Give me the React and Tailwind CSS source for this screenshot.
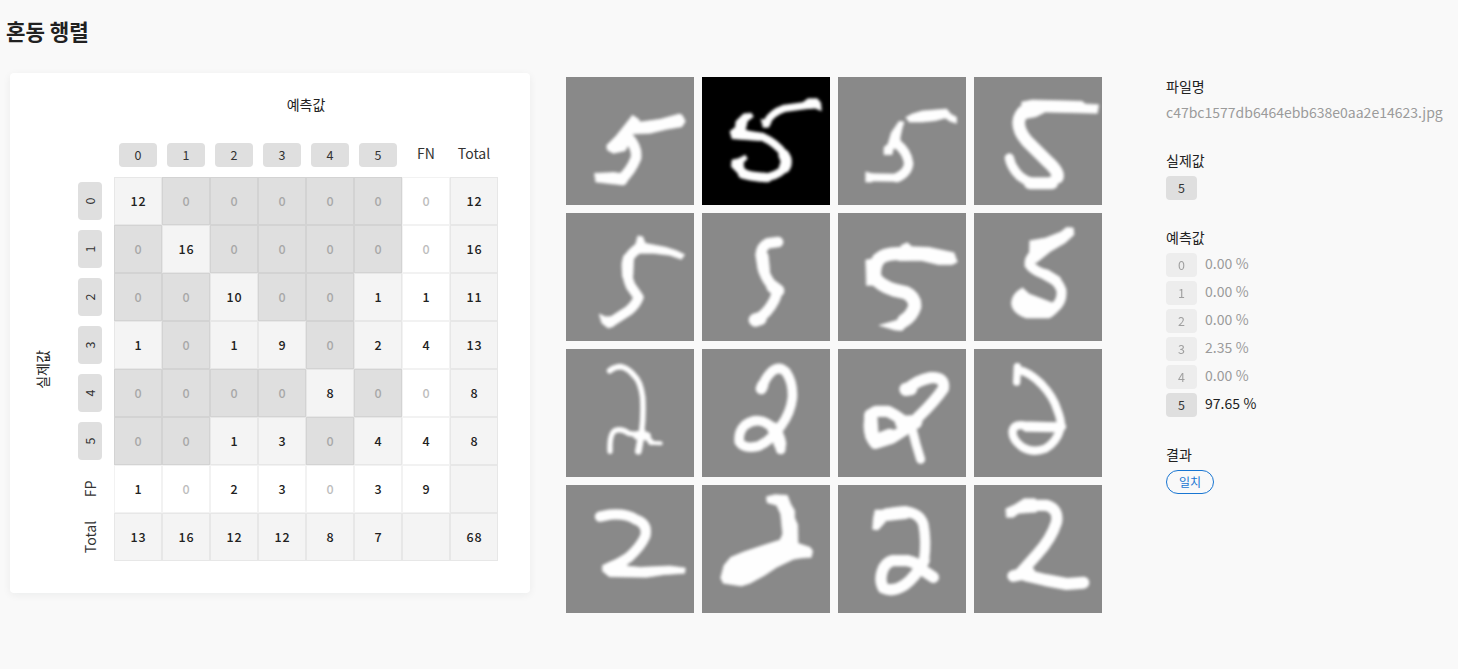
const classes = [0, 1, 2, 3, 4, 5];

const matrix = [
  [12, 0, 0, 0, 0, 0, 0, 12],
  [0, 16, 0, 0, 0, 0, 0, 16],
  [0, 0, 10, 0, 0, 1, 1, 11],
  [1, 0, 1, 9, 0, 2, 4, 13],
  [0, 0, 0, 0, 8, 0, 0, 8],
  [0, 0, 1, 3, 0, 4, 4, 8],
  [1, 0, 2, 3, 0, 3, 9, null],
  [13, 16, 12, 12, 8, 7, null, 68],
];

const predictions = ["0.00 %", "0.00 %", "0.00 %", "2.35 %", "0.00 %", "97.65 %"];

// Handwritten samples: each has a viewBox, pen strokes [path, width] and optional filled blobs.
const samples = [
  {
    box: "18 21 384 384",
    strokes: [
      ["M206 204Q232 232 228 264Q212 304 184 328", 32],
      ["M186 328L158 324", 36],
    ],
    fills: [
      "M218 136L236 148L240 156L300 148L350 134Q364 128 370 142L376 154L366 170L320 178L270 190L216 192L212 210L196 242L160 250L142 240L140 226L168 198L192 168Z",
      "M104 310L150 308L170 320L160 342L108 336Z",
    ],
  },
  {
    box: "426 21 384 384",
    selected: true,
    strokes: [
      ["M620 156Q636 128 674 115L735 107L768 103", 22],
      ["M562 194L606 200Q650 220 672 252Q690 282 670 298Q648 320 608 323Q562 320 540 300", 24],
      ["M548 312Q562 318 622 323", 28],
      ["M672 256Q684 274 674 292", 34],
    ],
    fills: [
      "M728 98L744 86L772 86L782 98L784 122L764 114L734 116Z",
      "M574 130L580 140L562 154L556 180L590 190L620 200L600 212L516 206L510 184L526 172L528 154L550 132Z",
      "M604 148L634 156L626 172L610 172Z",
      "M556 256L562 266L550 278L552 300L536 312L514 290L516 270L534 266Z",
    ],
  },
  {
    box: "18 21 384 384",
    strokes: [
      ["M196 222Q226 246 230 280Q228 308 194 323", 28],
      ["M196 323L114 322", 24],
    ],
    fills: [
      "M222 142L240 132L270 123L344 117L356 132L374 142L374 160L354 154L340 144L310 152L270 156L232 156Z",
      "M202 154L216 156L210 176L204 204L206 230L184 236L180 254L156 254L156 232L168 222L178 188Z",
      "M102 306L124 312L120 336L102 336Z",
    ],
  },
  {
    box: "426 21 384 384",
    strokes: [
      ["M600 112Q562 124 560 158Q560 184 584 212L646 274Q682 306 676 322", 38],
      ["M676 318Q660 342 622 342Q574 336 552 306Q536 286 532 264", 28],
      ["M594 340L660 340", 36],
    ],
    fills: [
      "M570 96L600 90L750 94L760 102L800 104L796 130L640 126L612 140L570 148Z",
    ],
  },
  {
    box: "18 429 384 384",
    strokes: [
      ["M236 534Q206 554 200 580Q198 616 212 648L236 682Q228 704 206 722L150 758", 30],
      ["M205 566L203 614", 34],
    ],
    fills: [
      "M234 498L248 500L256 520L318 532L350 542L374 554L364 568L330 556L280 550L240 550L224 536Z",
      "M118 732L136 740L156 740L162 768L144 774L126 760Z",
    ],
  },
  {
    box: "426 429 384 384",
    strokes: [
      ["M654 516L624 520Q604 530 602 554L608 592Q618 630 642 652Q656 666 642 692Q624 728 592 748", 32],
      ["M608 560L612 600", 36],
      ["M586 750L600 746", 40],
      ["M638 650L654 662", 38],
    ],
  },
  {
    box: "18 429 384 384",
    strokes: [
      ["M222 552Q160 546 140 568Q124 590 128 622Q144 646 186 660L222 668Q250 682 248 710Q240 736 216 752", 40],
      ["M240 550L350 566", 32],
    ],
    fills: [
      "M102 570L146 562L146 646L104 646Z",
      "M208 526L226 518L240 530L290 532L366 548L376 576L360 584L320 584L270 572L200 572Z",
      "M142 766L190 752L220 738L232 760L210 782L188 780Z",
    ],
  },
  {
    box: "426 429 384 384",
    strokes: [
      ["M600 560Q584 580 602 594Q618 608 644 614Q680 634 688 660Q692 694 668 712", 30],
      ["M640 614L672 632", 32],
    ],
    fills: [
      "M594 512L640 504L686 486L704 472L724 474L726 494L700 518L656 544L616 576L578 590L592 552Z",
      "M572 654L592 672L618 682L660 698L696 700Q676 732 652 744L582 744Q540 730 538 700Q540 668 572 654Z",
    ],
  },
  {
    box: "18 15 384 384",
    strokes: [
      ["M149 80Q164 68 184 68Q204 72 222 94Q242 112 248 160Q251 216 245 262", 17],
      ["M246 262L235 322", 20],
      ["M150 322Q148 272 164 260Q184 252 206 268L248 274Q264 280 274 295", 16],
      ["M270 296L302 298", 12],
      ["M232 274L260 276", 26],
    ],
  },
  {
    box: "426 15 384 384",
    strokes: [
      ["M606 132Q614 102 636 82Q658 64 678 84Q700 116 697 162Q692 206 664 244Q636 288 594 307Q552 316 538 294Q534 264 554 244Q582 222 612 234Q650 250 658 292", 29],
      ["M604 134L608 124", 34],
      ["M640 254Q656 274 660 300", 38],
      ["M661 296L662 316", 30],
    ],
  },
  {
    box: "18 15 384 384",
    strokes: [
      ["M224 138Q250 110 296 101Q340 98 334 134Q308 172 262 216L230 250L180 282L130 298Q110 276 112 240Q114 206 134 202L168 202Q204 220 234 248", 34],
      ["M116 214L120 276", 40],
      ["M138 288L174 274", 40],
      ["M210 236L250 234", 42],
      ["M240 254L252 300L266 346", 27],
      ["M222 136L236 134", 40],
    ],
  },
  {
    box: "426 15 384 384",
    strokes: [
      ["M554 114L556 68", 22],
      ["M560 78Q592 84 628 120Q664 158 676 198Q690 234 686 252Q674 294 640 314Q604 328 572 310Q538 286 542 260Q546 240 576 244L690 248", 25],
      ["M584 249L672 250", 29],
    ],
  },
  {
    box: "18 423 384 384",
    strokes: [
      ["M120 518L150 512Q200 508 226 526Q264 538 256 576Q242 608 206 640Q176 660 150 670", 31],
    ],
    fills: [
      "M128 664L160 650L208 644L200 666L240 670L330 666L376 672L374 688L310 692L260 700L148 698L128 682Z",
    ],
  },
  {
    box: "426 423 384 384",
    fills: [
      "M620 458L644 452L682 454L692 480L704 500L704 522L713 542L714 598L750 610L758 620L754 640L722 642L700 646L650 670L614 694L570 718L544 726L490 718L482 702L492 664L512 640L550 624L610 604L660 588L668 570L662 510L650 484L622 476Z",
    ],
    strokes: [],
  },
  {
    box: "18 423 384 384",
    strokes: [
      ["M150 516Q170 504 220 502Q264 508 274 540Q284 592 276 650", 31],
      ["M276 650Q252 698 216 724Q182 746 154 732Q142 712 150 684Q158 656 180 650L226 650Q258 656 268 676L304 700", 34],
      ["M164 512L220 506", 38],
    ],
    fills: ["M130 498L160 498L160 534L138 558L122 556L124 524Z"],
  },
  {
    box: "426 423 384 384",
    strokes: [
      ["M596 484L644 484Q682 496 673 536Q658 584 616 630L568 684", 34],
      ["M582 694L640 708L704 720L754 716", 36],
      ["M544 696L592 686", 36],
    ],
    fills: ["M522 494L548 482L576 464L610 464L614 504L560 508L544 520L524 520Z"],
  },
];

function Sample({ box, strokes, fills = [], selected }) {
  return (
    <div className={"size-32 overflow-hidden " + (selected ? "bg-black" : "bg-[#898989]")}>
      <svg viewBox={box} className="block size-32">
        <g className="blur-[4px]" fill="none" stroke="#fefefe" strokeLinecap="round" strokeLinejoin="round">
          {strokes.map(([d, width]) => (
            <path key={d} d={d} strokeWidth={width} />
          ))}
          {fills.map((d) => (
            <path key={d} d={d} fill="#fefefe" strokeWidth="2" />
          ))}
        </g>
      </svg>
    </div>
  );
}

function Badge({ children, size = "w-[38px]", faded }) {
  return (
    <span
      className={
        "flex h-6 shrink-0 items-center justify-center rounded bg-[#dfdfdf] pt-px text-[12.5px] leading-none text-[#333] " +
        size +
        (faded ? " opacity-45" : "")
      }
    >
      {children}
    </span>
  );
}

function cellTone(value, row, col) {
  if (row === 7 || col === 7) return "bg-[#f4f4f4] text-[#212121]";
  if (row === 6 || col === 6) return value === 0 ? "bg-white text-[#bdbdbd]" : "bg-white text-[#212121]";
  return value === 0 ? "bg-[#dfdfdf] text-[#a8a8a8]" : "bg-[#f4f4f4] text-[#212121]";
}

function Cell({ value, row, col }) {
  return (
    <div
      className={
        "flex size-12 items-center justify-center border border-black/5 pl-px text-[12.5px] font-medium leading-[18px] tracking-[0.9px] " +
        cellTone(value, row, col)
      }
    >
      {value}
    </div>
  );
}

function MatrixCard() {
  return (
    <section className="flex size-[520px] flex-col rounded bg-white shadow-[0_2px_8px_rgba(0,30,30,0.06)]">
      <div className="flex h-16 items-center justify-center pb-0.5 pl-[72px] text-[14px] text-[#212121]">예측값</div>
      <div className="flex h-10 pl-[104px]">
        {classes.map((c) => (
          <div key={c} className="flex w-12 justify-center pt-[6px]">
            <Badge>{c}</Badge>
          </div>
        ))}
        <div className="w-12 pt-[6px] text-center text-[14px] leading-5 text-[#333]">FN</div>
        <div className="w-12 pt-[6px] text-center text-[14px] leading-5 text-[#333]">Total</div>
      </div>
      <div className="flex">
        <div className="flex w-16 items-center justify-center">
          <span className="-rotate-90 whitespace-nowrap text-[14px] text-[#212121]">실제값</span>
        </div>
        <div className="flex w-10 flex-col pl-1">
          {classes.map((c) => (
            <div key={c} className="flex h-12 w-6 items-center justify-center">
              <div className="-rotate-90">
                <Badge>{c}</Badge>
              </div>
            </div>
          ))}
          {["FP", "Total"].map((label) => (
            <div key={label} className="flex h-12 w-6 items-center justify-center">
              <span className="-rotate-90 text-[14px] leading-5 text-[#333]">{label}</span>
            </div>
          ))}
        </div>
        <div className="grid grid-cols-8">
          {matrix.map((values, row) =>
            values.map((value, col) => <Cell key={row + "-" + col} value={value} row={row} col={col} />)
          )}
        </div>
      </div>
    </section>
  );
}

function Details() {
  return (
    <aside className="flex flex-col text-[14px] text-[#212121]">
      <h2 className="h-5 leading-[18px]">파일명</h2>
      <p className="mt-[5px] h-5 whitespace-nowrap leading-5 text-[#9b9b9b]">c47bc1577db6464ebb638e0aa2e14623.jpg</p>
      <h2 className="mt-[29px] h-5 leading-[18px]">실제값</h2>
      <div className="mt-[5px]">
        <Badge size="w-[31px]">5</Badge>
      </div>
      <h2 className="mt-[28px] h-5 leading-[18px]">예측값</h2>
      <ul className="mt-[5px] flex flex-col gap-1">
        {predictions.map((p, i) => (
          <li key={i} className="flex h-6 gap-2">
            <Badge size="w-[31px]" faded={i !== 5}>
              {i}
            </Badge>
            <span className={"leading-5 [word-spacing:0.5px] " + (i === 5 ? "" : "text-[#9b9b9b]")}>{p}</span>
          </li>
        ))}
      </ul>
      <h2 className="mt-[28px] h-5 leading-[18px]">결과</h2>
      <span className="mt-[5px] flex h-6 w-12 items-center justify-center rounded-full border border-[#1976d2] text-[12px] text-[#1976d2]">
        일치
      </span>
    </aside>
  );
}

export default function App() {
  return (
    <div className="h-[669px] overflow-hidden bg-[#f9f9f9] font-['Noto_Sans_CJK_KR',sans-serif]">
      <h1 className="h-[73px] pl-[6px] pt-[15px] text-[21.2px] font-bold leading-8 text-[#212121]">혼동 행렬</h1>
      <main className="flex pl-[10px]">
        <MatrixCard />
        <div className="ml-9 mt-1 grid h-fit grid-cols-4 gap-2">
          {samples.map((s, i) => (
            <Sample key={i} {...s} />
          ))}
        </div>
        <div className="ml-16 mt-1">
          <Details />
        </div>
      </main>
    </div>
  );
}
